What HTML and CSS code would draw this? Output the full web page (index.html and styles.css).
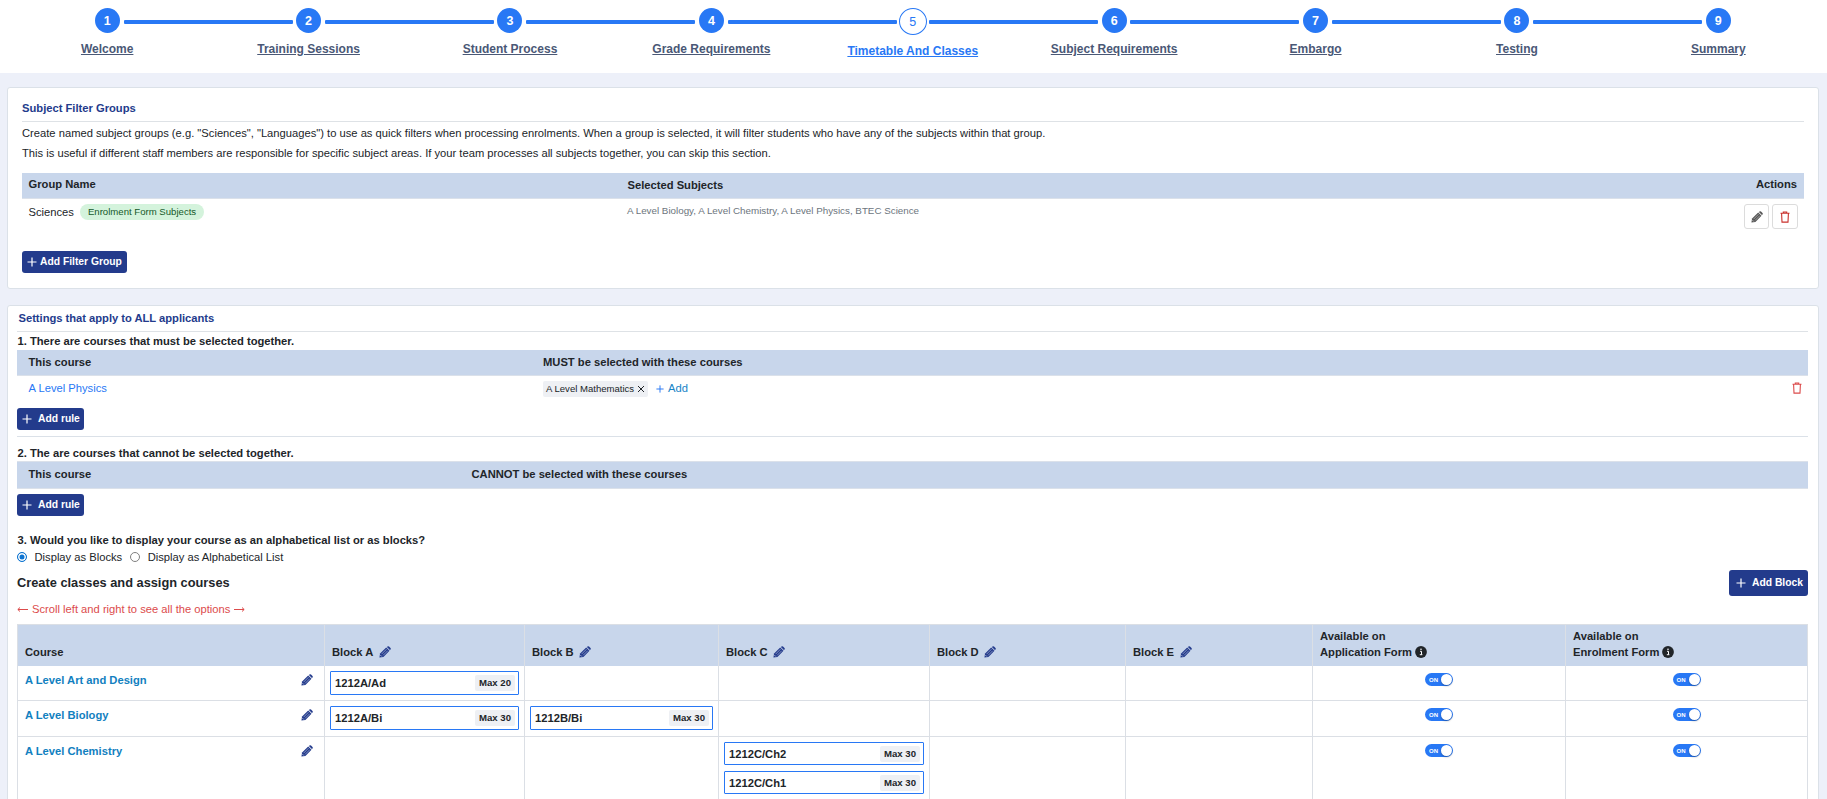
FILE: index.html
```html
<!DOCTYPE html>
<html lang="en">
<head>
<meta charset="utf-8">
<title>Timetable And Classes</title>
<link rel="stylesheet" href="styles.css">
</head>
<body>
<svg class="defs" aria-hidden="true">
  <symbol id="pencil" viewBox="0 0 12 12"><path d="M.4 11.600l.7-4L7.200 1.500l3.300 3.300-6.100 6.100z" fill="currentColor"/><path d="M7.900 1l.6-.5a1.200 1.200 0 0 1 1.500 0l1.500 1.500a1.200 1.200 0 0 1 0 1.500l-.6.6z" fill="currentColor"/><path d="M2.600 8.100l4.900-4.900M4.100 9.400l4.700-4.700" stroke="#fff" stroke-opacity=".55" stroke-width=".8" fill="none"/><path d="M1.600 9.300l1.100 1.100" stroke="#fff" stroke-width=".8"/></symbol>
  <symbol id="trash" viewBox="0 0 10 12"><path d="M.5 2.300h9M3.300 2V1h3.400v1M1.600 2.500l.4 8.600h6l.4-8.600" fill="none" stroke="currentColor" stroke-width="1.100"/></symbol>
  <symbol id="plus" viewBox="0 0 10 10"><path d="M5 .5v9M.5 5h9" fill="none" stroke="currentColor" stroke-width="1.200"/></symbol>
  <symbol id="cross" viewBox="0 0 8 8"><path d="M1 1l6 6M7 1L1 7" fill="none" stroke="currentColor" stroke-width="1"/></symbol>
  <symbol id="info" viewBox="0 0 12 12"><circle cx="6" cy="6" r="5.900" fill="currentColor"/><path d="M5 5.300h1.500v3.200M4.800 8.700h2.600" fill="none" stroke="#fff" stroke-width="1"/><circle cx="6" cy="3.300" r=".8" fill="#fff"/></symbol>
</svg>

<nav class="stepper">
  <a class="step"><span class="dot">1</span><span class="label">Welcome</span></a>
  <a class="step"><span class="dot">2</span><span class="label">Training Sessions</span></a>
  <a class="step"><span class="dot">3</span><span class="label">Student Process</span></a>
  <a class="step"><span class="dot">4</span><span class="label">Grade Requirements</span></a>
  <a class="step current"><span class="dot">5</span><span class="label">Timetable And Classes</span></a>
  <a class="step"><span class="dot">6</span><span class="label">Subject Requirements</span></a>
  <a class="step"><span class="dot">7</span><span class="label">Embargo</span></a>
  <a class="step"><span class="dot">8</span><span class="label">Testing</span></a>
  <a class="step"><span class="dot">9</span><span class="label">Summary</span></a>
</nav>

<section class="card filters">
  <h2>Subject Filter Groups</h2>
  <p>Create named subject groups (e.g. "Sciences", "Languages") to use as quick filters when processing enrolments. When a group is selected, it will filter students who have any of the subjects within that group.</p>
  <p>This is useful if different staff members are responsible for specific subject areas. If your team processes all subjects together, you can skip this section.</p>
  <div class="filter-head"><span>Group Name</span><span class="subjects-title">Selected Subjects</span><span>Actions</span></div>
  <div class="filter-row">
    <div class="group">Sciences<span class="badge">Enrolment Form Subjects</span></div>
    <div class="subjects">A Level Biology, A Level Chemistry, A Level Physics, BTEC Science</div>
    <div class="actions">
      <button class="icon-btn"><svg width="12" height="12"><use href="#pencil"/></svg></button>
      <button class="icon-btn danger"><svg width="10" height="12"><use href="#trash"/></svg></button>
    </div>
  </div>
  <button class="btn add-filter"><svg width="10" height="10"><use href="#plus"/></svg>Add Filter Group</button>
</section>

<section class="card settings">
  <h2>Settings that apply to ALL applicants</h2>
  <h3>1. There are courses that must be selected together.</h3>
  <div class="rule-head must"><span>This course</span><span>MUST be selected with these courses</span></div>
  <div class="rule-row">
    <a class="course-link">A Level Physics</a>
    <div class="chips"><span class="chip">A Level Mathematics<svg width="8" height="8"><use href="#cross"/></svg></span><a class="add"><svg width="8" height="8"><use href="#plus"/></svg>Add</a></div>
    <svg class="danger" width="10" height="12"><use href="#trash"/></svg>
  </div>
  <button class="btn add-rule"><svg width="10" height="10"><use href="#plus"/></svg>Add rule</button>
  <h3 class="second">2. The are courses that cannot be selected together.</h3>
  <div class="rule-head cannot"><span>This course</span><span>CANNOT be selected with these courses</span></div>
  <button class="btn add-rule"><svg width="10" height="10"><use href="#plus"/></svg>Add rule</button>
  <h3 class="third">3. Would you like to display your course as an alphabetical list or as blocks?</h3>
  <div class="radios"><span class="radio on"></span><span class="first">Display as Blocks</span><span class="radio"></span><span>Display as Alphabetical List</span></div>
  <div class="blocks-bar"><h4>Create classes and assign courses</h4><button class="btn add-block"><svg width="10" height="10"><use href="#plus"/></svg>Add Block</button></div>
  <div class="hint"><svg width="11" height="6" viewBox="0 0 11 6"><path d="M11 3.500H1M3 1.500l-2.200 2 2.200 2" fill="none" stroke="currentColor"/></svg><span>Scroll left and right to see all the options</span><svg width="11" height="6" viewBox="0 0 11 6"><path d="M0 3.500h10M8 1.500l2.200 2-2.200 2" fill="none" stroke="currentColor"/></svg></div>

  <div class="grid">
    <div class="th">Course</div>
    <div class="th">Block A<svg width="12" height="12"><use href="#pencil"/></svg></div>
    <div class="th">Block B<svg width="12" height="12"><use href="#pencil"/></svg></div>
    <div class="th">Block C<svg width="12" height="12"><use href="#pencil"/></svg></div>
    <div class="th">Block D<svg width="12" height="12"><use href="#pencil"/></svg></div>
    <div class="th">Block E<svg width="12" height="12"><use href="#pencil"/></svg></div>
    <div class="th two"><span>Available on</span><span>Application Form<svg width="12" height="12"><use href="#info"/></svg></span></div>
    <div class="th two"><span>Available on</span><span>Enrolment Form<svg width="12" height="12"><use href="#info"/></svg></span></div>

    <div class="name">A Level Art and Design<svg width="12" height="12"><use href="#pencil"/></svg></div>
    <div><div class="cls">1212A/Ad<span>Max 20</span></div></div>
    <div></div><div></div><div></div><div></div>
    <div class="sw"><span class="toggle">ON</span></div><div class="sw"><span class="toggle">ON</span></div>

    <div class="name">A Level Biology<svg width="12" height="12"><use href="#pencil"/></svg></div>
    <div><div class="cls">1212A/Bi<span>Max 30</span></div></div>
    <div><div class="cls">1212B/Bi<span>Max 30</span></div></div>
    <div></div><div></div><div></div>
    <div class="sw"><span class="toggle">ON</span></div><div class="sw"><span class="toggle">ON</span></div>

    <div class="name">A Level Chemistry<svg width="12" height="12"><use href="#pencil"/></svg></div>
    <div></div><div></div>
    <div><div class="cls short">1212C/Ch2<span>Max 30</span></div><div class="cls short">1212C/Ch1<span>Max 30</span></div></div>
    <div></div><div></div>
    <div class="sw"><span class="toggle">ON</span></div><div class="sw"><span class="toggle">ON</span></div>
  </div>
</section>
</body>
</html>
```
FILE: styles.css
```css
* { box-sizing: border-box; margin: 0; padding: 0; }
html, body { height: 799px; overflow: hidden; }
body { background: #edf0f9; color: #212529; font: 11.2px/16px "Liberation Sans", Arial, sans-serif; }
.defs { position: absolute; width: 0; height: 0; }
svg { display: block; flex: none; }
button { font: inherit; cursor: pointer; }

/* Progress stepper */
.stepper { height: 73px; background: #fff; display: grid; grid-template-columns: repeat(9, 201.4px); padding: 8px 0 0 6.500px; }
.step { display: flex; flex-direction: column; align-items: center; position: relative; color: #4a5876; font-size: 12px; font-weight: 700; }
.dot { width: 25px; height: 25px; border-radius: 50%; background: #2878f5; color: #fff; display: flex; align-items: center; justify-content: center; font-size: 12.5px; }
.label { margin-top: 8px; text-decoration: underline; white-space: nowrap; }
.step:not(:last-child)::after { content: ""; position: absolute; top: 12px; left: 117px; width: 169px; height: 4px; background: #2878f5; border-radius: 1px; }
.current { color: #2878f5; }
.current .dot { width: 28px; height: 27px; background: #fff; border: 1px solid #2878f5; color: #2878f5; font-weight: 400; }
.current .label { margin-top: 7.500px; }

.card { background: #fff; border: 1px solid #dbe1e8; border-radius: 3px; margin: 0 8px 0 7px; }
h2, h3 { font-size: 11.2px; line-height: 16px; font-weight: 700; }
h2 { color: #233b8c; border-bottom: 1px solid #dee2e6; }

.btn { display: flex; align-items: center; height: 22px; border: 0; border-radius: 3px; background: #233b8c; color: #fff; font-size: 10.3px; font-weight: 700; white-space: nowrap; }

/* Filter groups */
.filters { margin-top: 14px; height: 202px; padding: 12px 14px 0; }
.filters h2 { height: 22px; margin-bottom: 1px; }
.filters p { line-height: 20px; }
.filter-head { display: grid; grid-template-columns: 599px 1fr auto; height: 26px; margin-top: 10px; padding: 3px 7px 0 6.500px; background: #c8d6eb; border-bottom: 1px solid #dbe1ea; font-weight: 700; }
.subjects-title { padding-top: 1px; }
.filter-row { display: grid; grid-template-columns: 598.500px 1fr auto; height: 52px; padding: 5px 6px 0 6.500px; }
.group { display: flex; align-items: center; height: 16px; }
.badge { margin-left: 6px; height: 16px; padding: 0 8px; border-radius: 8px; background: #d4f3dc; color: #14592a; font-size: 9.6px; line-height: 16px; }
.subjects { color: #6c757d; font-size: 9.8px; line-height: 14px; }
.actions { display: flex; gap: 3px; }
.icon-btn { width: 26px; height: 25px; border: 1px solid #dcdcdc; border-radius: 3px; background: #fff; color: #555; display: grid; place-items: center; }
.icon-btn:first-child { width: 25px; }
.danger { color: #c9302c; }
.add-filter { width: 105px; padding-left: 5px; gap: 3px; }

/* Course rules */
.settings { margin-top: 16px; height: 520px; padding: 4px 10px 0 9px; }
.settings h2 { height: 22px; padding-left: 1.500px; letter-spacing: -.02px; }
.settings h3 { padding-left: .5px; height: 18px; line-height: 19px; }
.rule-head { display: grid; height: 26px; padding-left: 11.500px; background: #c8d6eb; border-bottom: 1px solid #dbe1ea; font-weight: 700; line-height: 24px; }
.must, .rule-row { grid-template-columns: 514.500px 1fr auto; }
.cannot { grid-template-columns: 443px 1fr; height: 28px; border-top: 1px solid #dbe1ea; line-height: 24px; margin-bottom: 5px; }
.rule-row { display: grid; height: 32px; padding: 5px 6px 0 11.500px; }
.rule-row > .danger { margin-top: 1px; color: #dc4b4b; }
.course-link { color: #2878f5; line-height: 15px; }
.chips { display: flex; align-items: flex-start; gap: 8px; }
.chip { display: flex; align-items: center; gap: 3px; height: 16px; padding: 0 3px; border-radius: 2px; background: #eef0f4; font-size: 9.55px; }
.add { display: flex; align-items: center; gap: 4px; color: #1784c7; line-height: 15px; }
.add svg { color: #2878f5; }
.add-rule { width: 67px; padding-left: 5px; gap: 6px; }
.settings .second { border-top: 1px solid #dbe1e8; margin-top: 6px; height: 25px; padding-top: 7px; }
.settings .third { margin-top: 15px; }

.radios { display: flex; align-items: center; height: 15px; }
.radio { width: 10px; height: 10px; border: 1px solid #808080; border-radius: 50%; margin-right: 7.500px; }
.radio.on { border-color: #0d74d1; background: #0d74d1; box-shadow: inset 0 0 0 1.500px #fff; }
.radios .first { margin-right: 8px; }
.blocks-bar { display: flex; align-items: center; justify-content: space-between; height: 26px; margin-top: 6px; }
h4 { font-size: 12.8px; }
.add-block { height: 26px; width: 79px; padding-left: 7px; gap: 6px; }
.hint { display: flex; align-items: center; gap: 4px; color: #dc4b4b; height: 16px; margin: 5px 0 7px; }

/* Block table */
.grid { display: grid; grid-template-columns: 307px 200px 194px 211px 196px 187px 253px 241px; grid-template-rows: 41px 35px 36px 80px; border: 1px solid #dbdfe5; }
.grid > div { border-right: 1px solid #dbdfe5; border-bottom: 1px solid #dbdfe5; padding: 5px; }
.grid > div:nth-child(8n) { border-right: 0; }
.grid > .th { background: #c8d6eb; border-bottom: 0; padding: 0 7px 6px; font-weight: 700; display: flex; align-items: flex-end; gap: 5.500px; }
.th svg { color: #233b8c; margin-bottom: 2px; }
.grid > .two { flex-direction: column; align-items: flex-start; justify-content: flex-end; gap: 0; }
.two span { display: flex; align-items: center; gap: 3px; }
.two svg { color: #212529; margin: 0; }
.grid > .name { display: flex; justify-content: space-between; padding: 6px 11px 0 7px; color: #1180c0; font-weight: 700; }
.name svg { color: #233b8c; margin-top: 2px; }
.cls { height: 24px; border: 1px solid #2878f5; border-radius: 1px; display: flex; align-items: center; justify-content: space-between; padding: 0 3px 0 4px; font-weight: 700; }
.cls.short { height: 23px; margin-bottom: 6px; }
.cls span { background: #eef0f4; border-radius: 2px; padding: 0 4px; font-size: 9.6px; height: 16px; }
.grid > .sw { display: flex; justify-content: center; padding-top: 6px; }
.toggle { position: relative; width: 28px; height: 13px; margin-top: 1px; border-radius: 7px; background: #2878f5; color: #fff; font-size: 6px; line-height: 14px; font-weight: 700; padding-left: 4px; }
.toggle::after { content: ""; position: absolute; right: 1px; top: 1px; width: 11px; height: 11px; border-radius: 50%; background: #fff; box-shadow: 0 1px 2px rgba(0, 0, 0, .3); }
```
